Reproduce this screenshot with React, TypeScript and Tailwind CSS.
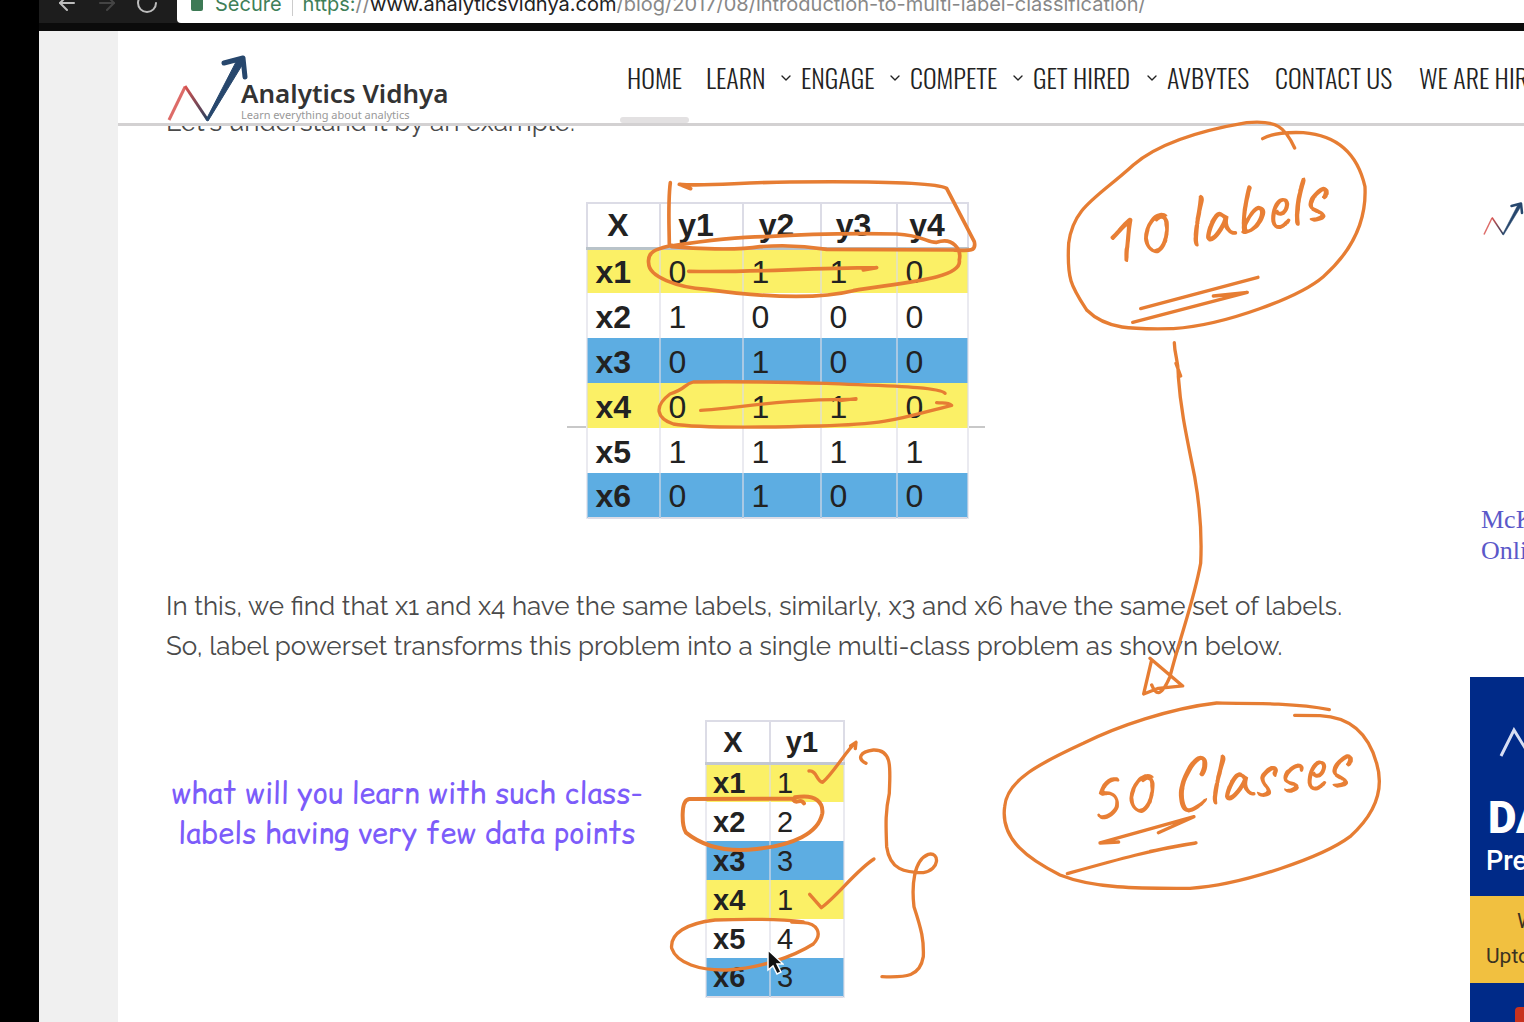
import React from "react";
import { ArrowLeft, ArrowRight, ChevronDown, RotateCw } from "lucide-react";

type NavItem = { label: string; width: string; menu?: boolean };

const NAV: NavItem[] = [
  { label: "HOME", width: "w-[79px]" },
  { label: "LEARN", width: "w-[95px]", menu: true },
  { label: "ENGAGE", width: "w-[109px]", menu: true },
  { label: "COMPETE", width: "w-[123px]", menu: true },
  { label: "GET HIRED", width: "w-[134px]", menu: true },
  { label: "AVBYTES", width: "w-[108px]" },
  { label: "CONTACT US", width: "w-[144px]" },
  { label: "WE ARE HIRING", width: "w-[150px]" },
];

const YELLOW = "bg-[#fbf066]";
const BLUE = "bg-[#5dade2]";
const WHITE = "bg-white";

const LABELS = [
  { name: "x1", tone: YELLOW, values: [0, 1, 1, 0] },
  { name: "x2", tone: WHITE, values: [1, 0, 0, 0] },
  { name: "x3", tone: BLUE, values: [0, 1, 0, 0] },
  { name: "x4", tone: YELLOW, values: [0, 1, 1, 0] },
  { name: "x5", tone: WHITE, values: [1, 1, 1, 1] },
  { name: "x6", tone: BLUE, values: [0, 1, 0, 0] },
];

const CLASSES = [
  { name: "x1", tone: YELLOW, value: 1 },
  { name: "x2", tone: WHITE, value: 2 },
  { name: "x3", tone: BLUE, value: 3 },
  { name: "x4", tone: YELLOW, value: 1 },
  { name: "x5", tone: WHITE, value: 4 },
  { name: "x6", tone: BLUE, value: 3 },
];

function LogoMark({ className }: { className: string }) {
  return (
    <svg viewBox="0 0 82 68" className={className} fill="none" aria-hidden="true">
      <defs>
        <linearGradient id="fall" x1="18" y1="32" x2="40" y2="64" gradientUnits="userSpaceOnUse">
          <stop offset="0" stopColor="#d8524f" />
          <stop offset="1" stopColor="#2b3f5c" />
        </linearGradient>
      </defs>
      <path d="M2 65 18 32" stroke="#dd6b68" strokeWidth="3" />
      <path d="M18 31 40 64" stroke="url(#fall)" strokeWidth="3" />
      <path d="M39 65 41 66 77 7 70 5Z" fill="#27476d" stroke="#27476d" strokeWidth="1" />
      <path d="M57 8 76 3 78 22" stroke="#27476d" strokeWidth="5" strokeLinejoin="round" strokeLinecap="round" />
    </svg>
  );
}

function BrowserBar() {
  return (
    <div className="flex h-[31px] items-start overflow-hidden border-b-8 border-[#0b0b0b] bg-[#1d1d1d]">
      <div className="-mt-4 flex h-[38px] w-[138px] shrink-0 items-center gap-4 pl-4">
        <button aria-label="Back"><ArrowLeft className="size-6 text-[#bdbdbd]" /></button>
        <button aria-label="Forward"><ArrowRight className="size-6 text-[#444]" /></button>
        <button aria-label="Reload"><RotateCw className="size-6 text-[#bdbdbd]" /></button>
      </div>
      <div className="-mt-4 flex h-[39px] flex-1 items-center whitespace-nowrap rounded-l bg-white pl-[14px] font-['Inter',sans-serif] text-[20px] leading-6">
        <span className="mb-3 h-[15px] w-3 self-end rounded-xs bg-[#3d7a55]" />
        <span className="pl-3 text-[#3f7f58]">Secure</span>
        <span className="mx-[10px] h-6 w-px bg-[#ccc]" />
        <a href="#url" className="text-[#888]">
          <span className="text-[#3f7f58]">https:</span>//<span className="text-[#222]">www.analyticsvidhya.com</span>/blog/2017/08/introduction-to-multi-label-classification/
        </a>
      </div>
    </div>
  );
}

function SiteHeader() {
  return (
    <header className="relative z-10 flex h-[95px] shrink-0 overflow-hidden border-b-3 border-[#d3d1d2] bg-white pl-[49px]">
      <a href="#home" className="flex w-[453px] shrink-0 items-end">
        <LogoMark className="h-[68px] w-[82px] shrink-0" />
        <span className="-ml-2 flex flex-col whitespace-nowrap pb-[2px] font-['Noto_Sans',sans-serif]">
          <span className="text-[26px] font-semibold leading-8 text-[#333]">Analytics Vidhya</span>
          <span className="text-[11px] leading-3 text-[#999]">Learn everything about analytics</span>
        </span>
      </a>
      <nav className="flex shrink-0 whitespace-nowrap font-['Oswald','Liberation_Sans_Narrow',sans-serif] text-[26px] font-light leading-8 text-[#222]">
        {NAV.map((item, i) => (
          <a key={item.label} href="#nav" className={`relative flex shrink-0 items-center justify-between pl-[7px] pt-[2px] ${item.width}`}>
            {item.label}
            {item.menu && <ChevronDown className="size-4 shrink-0" />}
            {i === 0 && <span className="absolute bottom-0 left-0 h-[6px] w-[69px] rounded-sm bg-[#e3e1e2]" />}
          </a>
        ))}
      </nav>
    </header>
  );
}

function LabelTable() {
  return (
    <table className="relative w-[381px] table-fixed border-collapse border-2 border-[#dcdce6] bg-white font-['Liberation_Sans',sans-serif] text-[32px] leading-8 text-[#222]">
      <colgroup>
        <col className="w-[73px]" />
        <col className="w-[83px]" />
        <col className="w-[78px]" />
        <col className="w-[76px]" />
        <col className="w-[71px]" />
      </colgroup>
      <thead>
        <tr className="h-[45px] border-b-3 border-[#b9c3c9]">
          {["X", "y1", "y2", "y3", "y4"].map((h) => (
            <th key={h} scope="col" className="border-x-2 border-[#dcdce6] p-0 pr-[10px] font-bold">{h}</th>
          ))}
        </tr>
      </thead>
      <tbody>
        {LABELS.map((row) => (
          <tr key={row.name} className={`h-[45px] ${row.tone}`}>
            <th scope="row" className="border-x-2 border-[#dcdce6]/60 p-0 pl-2 pt-[2px] text-left font-bold">{row.name}</th>
            {row.values.map((v, i) => (
              <td key={i} className="border-x-2 border-[#dcdce6]/60 p-0 pl-2 pt-[2px]">{v}</td>
            ))}
          </tr>
        ))}
      </tbody>
    </table>
  );
}

function ClassTable() {
  return (
    <table className="mr-1 w-[138px] table-fixed border-collapse border-2 border-[#dcdce6] bg-white font-['Liberation_Sans',sans-serif] text-[29px] leading-8 text-[#222]">
      <colgroup>
        <col className="w-[64px]" />
        <col className="w-[74px]" />
      </colgroup>
      <thead>
        <tr className="h-[42px] border-b-3 border-[#c3c8d2]">
          {["X", "y1"].map((h) => (
            <th key={h} scope="col" className="border-x-2 border-[#dcdce6] p-0 pr-[10px] font-bold">{h}</th>
          ))}
        </tr>
      </thead>
      <tbody>
        {CLASSES.map((row) => (
          <tr key={row.name} className={`h-[39px] ${row.tone}`}>
            <th scope="row" className="border-x-2 border-[#dcdce6]/60 p-0 pl-[6px] text-left font-bold">{row.name}</th>
            <td className="border-x-2 border-[#dcdce6]/60 p-0 pl-[6px]">{row.value}</td>
          </tr>
        ))}
      </tbody>
    </table>
  );
}

function Sidebar() {
  return (
    <aside className="flex w-[54px] shrink-0 flex-col overflow-hidden whitespace-nowrap">
      <div className="h-[308px] shrink-0 pl-[13px] pt-[76px]">
        <LogoMark className="h-[34px] w-[41px]" />
      </div>
      <a href="#ad" className="mt-[70px] shrink-0 pl-[11px] font-['Liberation_Serif',serif] text-[26px] leading-[31px] text-[#5b58c9]">
        McK
        <br />
        Onli
      </a>
      <div className="mt-[111px] shrink-0 bg-[#002a88] font-['Roboto',sans-serif] text-white">
        <div className="h-[219px] pt-[50px]">
          <svg viewBox="0 0 54 30" className="h-[30px] w-[54px]" fill="none" aria-hidden="true">
            <path d="M31 29 44 3 60 29" stroke="#d7def2" strokeWidth="3" />
          </svg>
          <p className="pl-[18px] pt-[36px] text-[44px] font-black leading-[50px]">DA</p>
          <p className="pl-4 text-[27px] font-medium leading-9">Pre</p>
        </div>
        <div className="h-[87px] bg-[#f1c040] pt-2 text-[21px] leading-[35px] text-[#3b3220]">
          <p className="pl-[47px]">W</p>
          <p className="pl-4">Upto</p>
        </div>
        <div className="ml-[45px] mt-6 h-10 w-20 rounded bg-[#c8321e]" />
      </div>
    </aside>
  );
}

/* Pen strokes drawn freehand over the page. */
function Ink() {
  return (
    <div className="pointer-events-none absolute left-0 top-0 z-20 text-[#e87f35]">
      <svg width="1400" height="1022" viewBox="0 0 1400 1022" fill="none" stroke="#e67d33" strokeLinecap="round" strokeLinejoin="round" aria-hidden="true">
        <g transform="translate(560 170) scale(.3333)" strokeWidth="11">
          <path d="M331 38C324 90 327 150 328 222" />
          <path d="M392 56 358 43C440 50 550 36 690 36 880 34 1120 34 1160 55L1243 215C1250 245 1230 243 1180 240L800 238C720 225 660 225 600 230 530 242 400 236 335 230" />
          <path d="M332 228C450 210 540 200 620 200 740 192 900 190 1010 192 1090 196 1100 218 1130 217 1180 200 1205 240 1198 270 1210 330 1000 340 880 362 760 392 600 380 440 358 350 352 266 320 266 280 260 240 300 235 335 226" />
          <path d="M386 304C600 308 700 295 950 293M910 300 950 293" />
        </g>
        <g transform="translate(560 340) scale(.3333)" strokeWidth="10">
          <path d="M1155 160C1140 140 980 138 800 130 650 126 500 124 400 126 370 134 380 146 330 162 280 200 290 235 340 252 420 266 620 262 780 258 1000 252 1030 232 1175 196 1165 186 1150 190 1130 188" />
          <path d="M422 211C520 208 650 176 888 178M840 182 888 176" />
        </g>
        <g transform="translate(1040 110) scale(.3333)" strokeWidth="10">
          <path d="M764 114C735 50 710 30 620 38 460 65 350 105 280 165 170 265 100 290 86 400 80 510 95 530 140 600 200 660 280 658 400 656 560 645 780 560 850 500 940 420 980 330 975 230 950 120 880 75 790 68 740 66 700 68 668 86" />
          <path d="M302 596 654 502M278 637 622 547 520 558 610 550" />
        </g>
        <g transform="translate(1100 330) scale(.3333)" strokeWidth="10">
          <path d="M223 38C224 80 236 90 235 140 242 240 260 320 284 440 300 530 306 620 302 700 280 820 240 920 210 1040 180 1110 165 1090 155 1065M242 138 228 100M150 985 248 1068 175 1075 131 1092 155 990" />
        </g>
        <g transform="translate(990 640) scale(.3333)" strokeWidth="10">
          <path d="M1018 209C920 190 800 190 680 189 540 205 380 260 280 310 150 370 50 420 44 500 30 600 120 660 210 705 310 745 440 746 600 745 760 735 1000 650 1080 590 1180 500 1175 420 1160 370 1130 260 1060 230 990 227L914 226" />
          <path d="M386 606 330 609 612 530 505 578M232 701C360 665 500 625 618 609L480 634" />
        </g>
        <g transform="translate(660 710) scale(.3333)" strokeWidth="10">
          <path d="M447 183C470 180 470 215 488 217 520 190 560 120 588 97L586 116M588 97 572 108" />
          <path d="M618 160C590 145 600 125 640 120 700 118 690 180 688 250 675 310 678 350 680 410 690 480 735 488 790 488 840 480 840 425 805 433 760 450 755 530 762 590 785 660 792 690 790 740 780 800 740 803 666 800" />
          <path d="M432 280C420 262 410 285 400 270M405 262C470 250 490 280 487 310 475 370 400 405 290 417 200 428 130 410 78 368 66 350 60 270 88 267L405 266" strokeWidth="12" />
          <path d="M449 553 484 593C530 560 590 480 642 447" />
          <path d="M430 636C340 625 220 628 165 630 80 640 30 670 35 715 50 760 120 782 200 780 300 775 400 740 460 702 490 670 470 640 430 638L395 636" />
        </g>
      </svg>
      <span className="absolute left-[1096px] top-[178px] -rotate-12 whitespace-nowrap font-['Caveat','Lato',cursive] text-[76px] leading-[80px]">10 labels</span>
      <span className="absolute left-[1084px] top-[740px] -rotate-8 whitespace-nowrap font-['Caveat','Lato',cursive] text-[74px] leading-[80px]">50 Classes</span>
      <svg viewBox="0 0 18 28" className="absolute left-[766px] top-[948px] h-[28px] w-[18px]" aria-hidden="true">
        <path d="M2 2V22L7 18 11 26 15 24 11 16H17Z" fill="#111" stroke="#fff" strokeWidth="1.5" />
      </svg>
    </div>
  );
}

export default function App() {
  return (
    <div className="relative flex h-screen overflow-hidden bg-black">
      <div className="ml-[39px] flex min-w-0 flex-1 flex-col">
        <BrowserBar />
        <div className="flex min-h-0 flex-1 bg-[#f0f0f0] pl-[79px]">
          <div className="flex min-w-0 flex-1 flex-col bg-white">
            <SiteHeader />
            <div className="flex min-h-0 flex-1">
              <main className="min-w-0 flex-1 pl-12 pr-[82px] font-['Raleway','Lato',sans-serif] text-[26px] leading-10 text-[#4a4a4a]">
                <p className="-mt-6">Let's understand it by an example:</p>
                <div className="relative mt-[60px] flex justify-center">
                  <span className="absolute left-[401px] top-[224px] h-[2px] w-[418px] bg-[#c8c8c8]" />
                  <LabelTable />
                </div>
                <p className="mt-[67px] whitespace-nowrap">
                  In this, we find that x1 and x4 have the same labels, similarly, x3 and x6 have the same set of labels.
                  <br />
                  So, label powerset transforms this problem into a single multi-class problem as shown below.
                </p>
                <div className="relative mt-[54px] flex justify-center">
                  <p className="absolute left-0 top-[53px] w-[482px] whitespace-nowrap text-center font-['Comic_Relief','Comic_Neue','Open_Sans',sans-serif] text-[29px] leading-10 text-[#7c5cfa]">
                    what will you learn with such class-
                    <br />
                    labels having very few data points
                  </p>
                  <ClassTable />
                </div>
              </main>
              <Sidebar />
            </div>
          </div>
        </div>
      </div>
      <Ink />
    </div>
  );
}
